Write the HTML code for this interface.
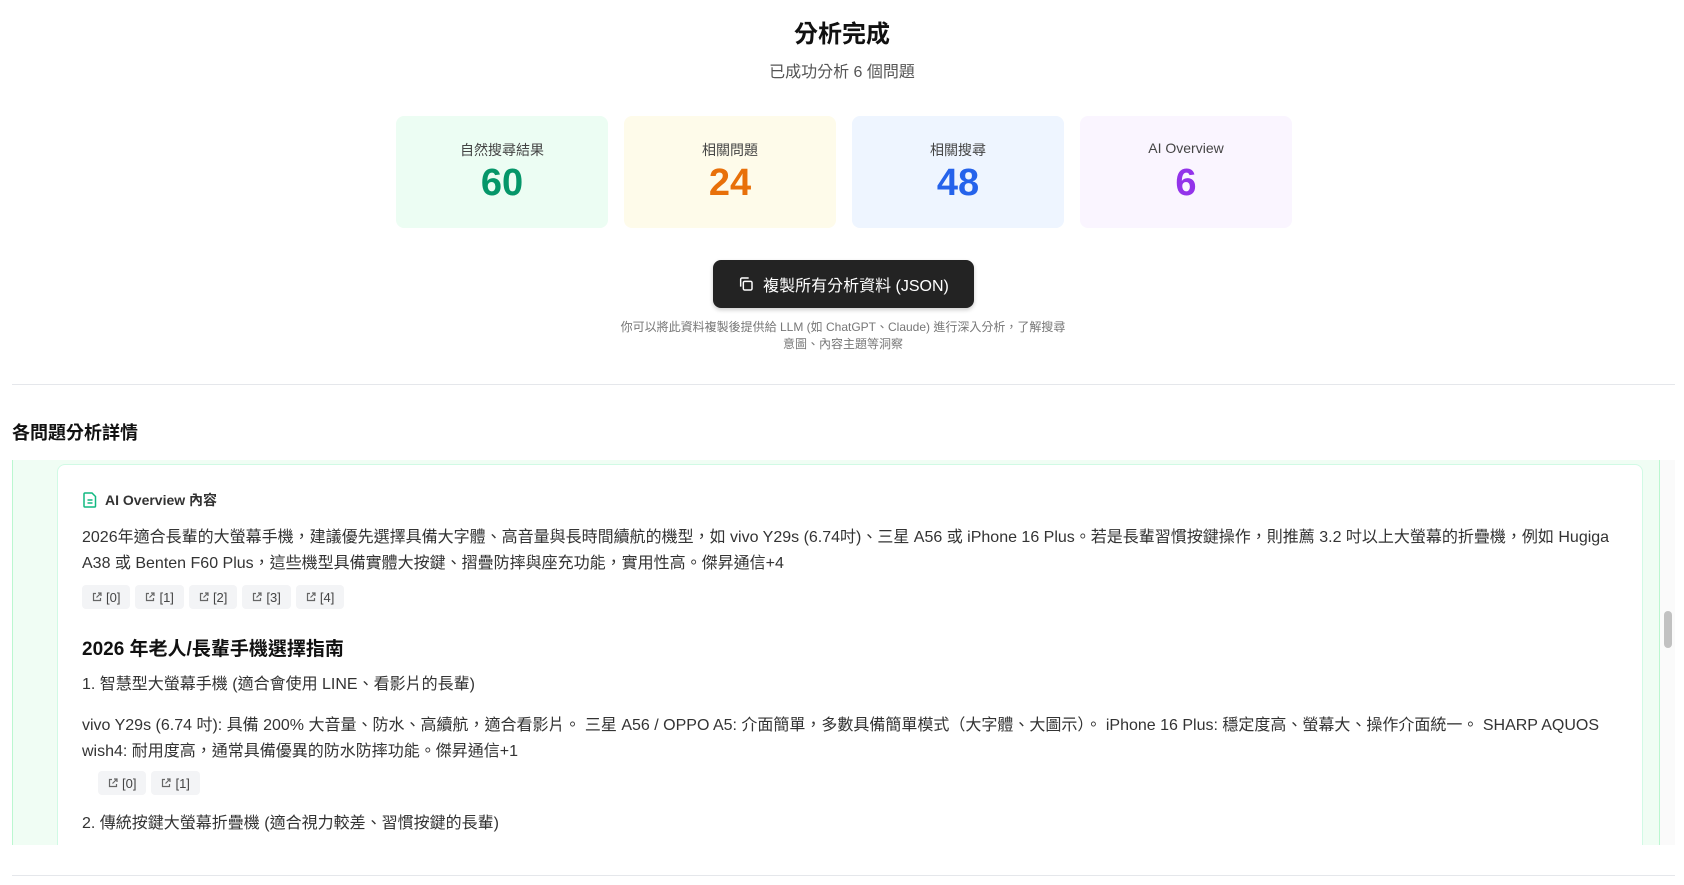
<!DOCTYPE html>
<html><head><meta charset="utf-8"><style>
*{box-sizing:border-box;margin:0;padding:0}
body{width:1684px;height:885px;overflow:hidden;background:#fff;font-family:"Liberation Sans","Noto Sans CJK TC",sans-serif;color:#222;position:relative}
.a{position:absolute}
.c{text-align:center}
.card{position:absolute;top:116px;width:212px;height:112px;border-radius:8px;text-align:center}
.card .l{position:absolute;top:24px;width:100%;font-size:14px;color:#444}
.card .v{position:absolute;top:48px;width:100%;font-size:38px;font-weight:bold;line-height:1}
.chip{display:inline-flex;align-items:center;gap:4px;height:24px;padding:0 10px;background:#f3f4f6;border-radius:4px;font-size:13px;color:#444;margin-right:5px}
.p{font-size:16px;color:#333;line-height:26px}
</style></head><body>
<div class="a c" style="left:0;width:1684px;top:14px;font-size:24px;font-weight:bold;color:#111">分析完成</div>
<div class="a c" style="left:0;width:1684px;top:58px;font-size:16px;color:#555">已成功分析 6 個問題</div>
<div class="card" style="left:396px;background:#ecfdf3"><div class="l">自然搜尋結果</div><div class="v" style="color:#059669">60</div></div>
<div class="card" style="left:624px;background:#fefbea"><div class="l">相關問題</div><div class="v" style="color:#e8700a">24</div></div>
<div class="card" style="left:852px;background:#eef5ff"><div class="l">相關搜尋</div><div class="v" style="color:#2563eb">48</div></div>
<div class="card" style="left:1080px;background:#faf5ff"><div class="l">AI Overview</div><div class="v" style="color:#9333ea">6</div></div>
<div class="a" style="left:713px;top:260px;width:261px;height:48px;background:#232323;border-radius:8px;box-shadow:0 2px 4px rgba(0,0,0,.2);color:#fff;font-size:16px;display:flex;align-items:center;justify-content:center;gap:9px">
<svg width="16" height="16" viewBox="0 0 24 24" fill="none" stroke="#fff" stroke-width="2.2"><rect x="8" y="8" width="13" height="13" rx="2"/><path d="M4 16V5a2 2 0 0 1 2-2h10"/></svg>複製所有分析資料 (JSON)</div>
<div class="a c" style="left:620px;width:446px;top:319px;font-size:12px;line-height:17px;color:#777">你可以將此資料複製後提供給 LLM (如 ChatGPT、Claude) 進行深入分析，了解搜尋意圖、內容主題等洞察</div>
<div class="a" style="left:12px;top:384px;width:1663px;height:1px;background:#e5e7eb"></div>
<div class="a" style="left:12px;top:419px;font-size:18px;font-weight:bold;color:#111">各問題分析詳情</div>
<div class="a" style="left:12px;top:460px;width:1648px;height:385px;background:#f0fdf4;border-left:1px solid #bbf7d0;border-right:1px solid #bbf7d0"></div>
<div class="a" style="left:1660px;top:460px;width:15px;height:385px;background:#fafafa"></div>
<div class="a" style="left:1664px;top:611px;width:8px;height:37px;background:#c1c1c1;border-radius:4px"></div>
<div class="a" style="left:57px;top:464px;width:1586px;height:400px;background:#fff;border:1px solid #d1fae5;border-radius:8px"></div>
<div class="a" style="left:0;top:845px;width:1684px;height:40px;background:#fff"></div>
<div class="a" style="left:12px;top:875px;width:1663px;height:1px;background:#e5e7eb"></div>
<div class="a" style="left:83px;top:490px;display:flex;align-items:center;gap:8px;font-size:14px;font-weight:bold;color:#333">
<svg width="14" height="16" viewBox="0 0 14 16" fill="none" stroke="#10b981" stroke-width="1.5"><path d="M2 1h7l3.5 3.5V14a1 1 0 0 1-1 1H2a1 1 0 0 1-1-1V2a1 1 0 0 1 1-1z"/><path d="M4.5 8h5M4.5 11h5"/></svg>AI Overview 內容</div>
<div class="a p" style="left:82px;top:525px;width:1545px">2026年適合長輩的大螢幕手機，建議優先選擇具備大字體、高音量與長時間續航的機型，如 vivo Y29s (6.74吋)、三星 A56 或 iPhone 16 Plus。若是長輩習慣按鍵操作，則推薦 3.2 吋以上大螢幕的折疊機，例如 Hugiga A38 或 Benten F60 Plus，這些機型具備實體大按鍵、摺疊防摔與座充功能，實用性高。傑昇通信+4</div>
<div class="a" style="left:82px;top:585px"><span class="chip"><svg width="10" height="10" viewBox="0 0 10 10" fill="none" stroke="#666" stroke-width="1.2"><path d="M4 1.5H1.5v7h7V6M6 1h3v3M9 1 4.5 5.5"/></svg>[0]</span><span class="chip"><svg width="10" height="10" viewBox="0 0 10 10" fill="none" stroke="#666" stroke-width="1.2"><path d="M4 1.5H1.5v7h7V6M6 1h3v3M9 1 4.5 5.5"/></svg>[1]</span><span class="chip"><svg width="10" height="10" viewBox="0 0 10 10" fill="none" stroke="#666" stroke-width="1.2"><path d="M4 1.5H1.5v7h7V6M6 1h3v3M9 1 4.5 5.5"/></svg>[2]</span><span class="chip"><svg width="10" height="10" viewBox="0 0 10 10" fill="none" stroke="#666" stroke-width="1.2"><path d="M4 1.5H1.5v7h7V6M6 1h3v3M9 1 4.5 5.5"/></svg>[3]</span><span class="chip"><svg width="10" height="10" viewBox="0 0 10 10" fill="none" stroke="#666" stroke-width="1.2"><path d="M4 1.5H1.5v7h7V6M6 1h3v3M9 1 4.5 5.5"/></svg>[4]</span></div>
<div class="a" style="left:82px;top:634px;font-size:19px;font-weight:bold;color:#111">2026 年老人/長輩手機選擇指南</div>
<div class="a p" style="left:82px;top:672px">1. 智慧型大螢幕手機 (適合會使用 LINE、看影片的長輩)</div>
<div class="a p" style="left:82px;top:713px;width:1545px">vivo Y29s (6.74 吋): 具備 200% 大音量、防水、高續航，適合看影片。 三星 A56 / OPPO A5: 介面簡單，多數具備簡單模式（大字體、大圖示）。 iPhone 16 Plus: 穩定度高、螢幕大、操作介面統一。 SHARP AQUOS wish4: 耐用度高，通常具備優異的防水防摔功能。傑昇通信+1</div>
<div class="a" style="left:98px;top:771px"><span class="chip"><svg width="10" height="10" viewBox="0 0 10 10" fill="none" stroke="#666" stroke-width="1.2"><path d="M4 1.5H1.5v7h7V6M6 1h3v3M9 1 4.5 5.5"/></svg>[0]</span><span class="chip"><svg width="10" height="10" viewBox="0 0 10 10" fill="none" stroke="#666" stroke-width="1.2"><path d="M4 1.5H1.5v7h7V6M6 1h3v3M9 1 4.5 5.5"/></svg>[1]</span></div>
<div class="a p" style="left:82px;top:811px">2. 傳統按鍵大螢幕折疊機 (適合視力較差、習慣按鍵的長輩)</div>
</body></html>
